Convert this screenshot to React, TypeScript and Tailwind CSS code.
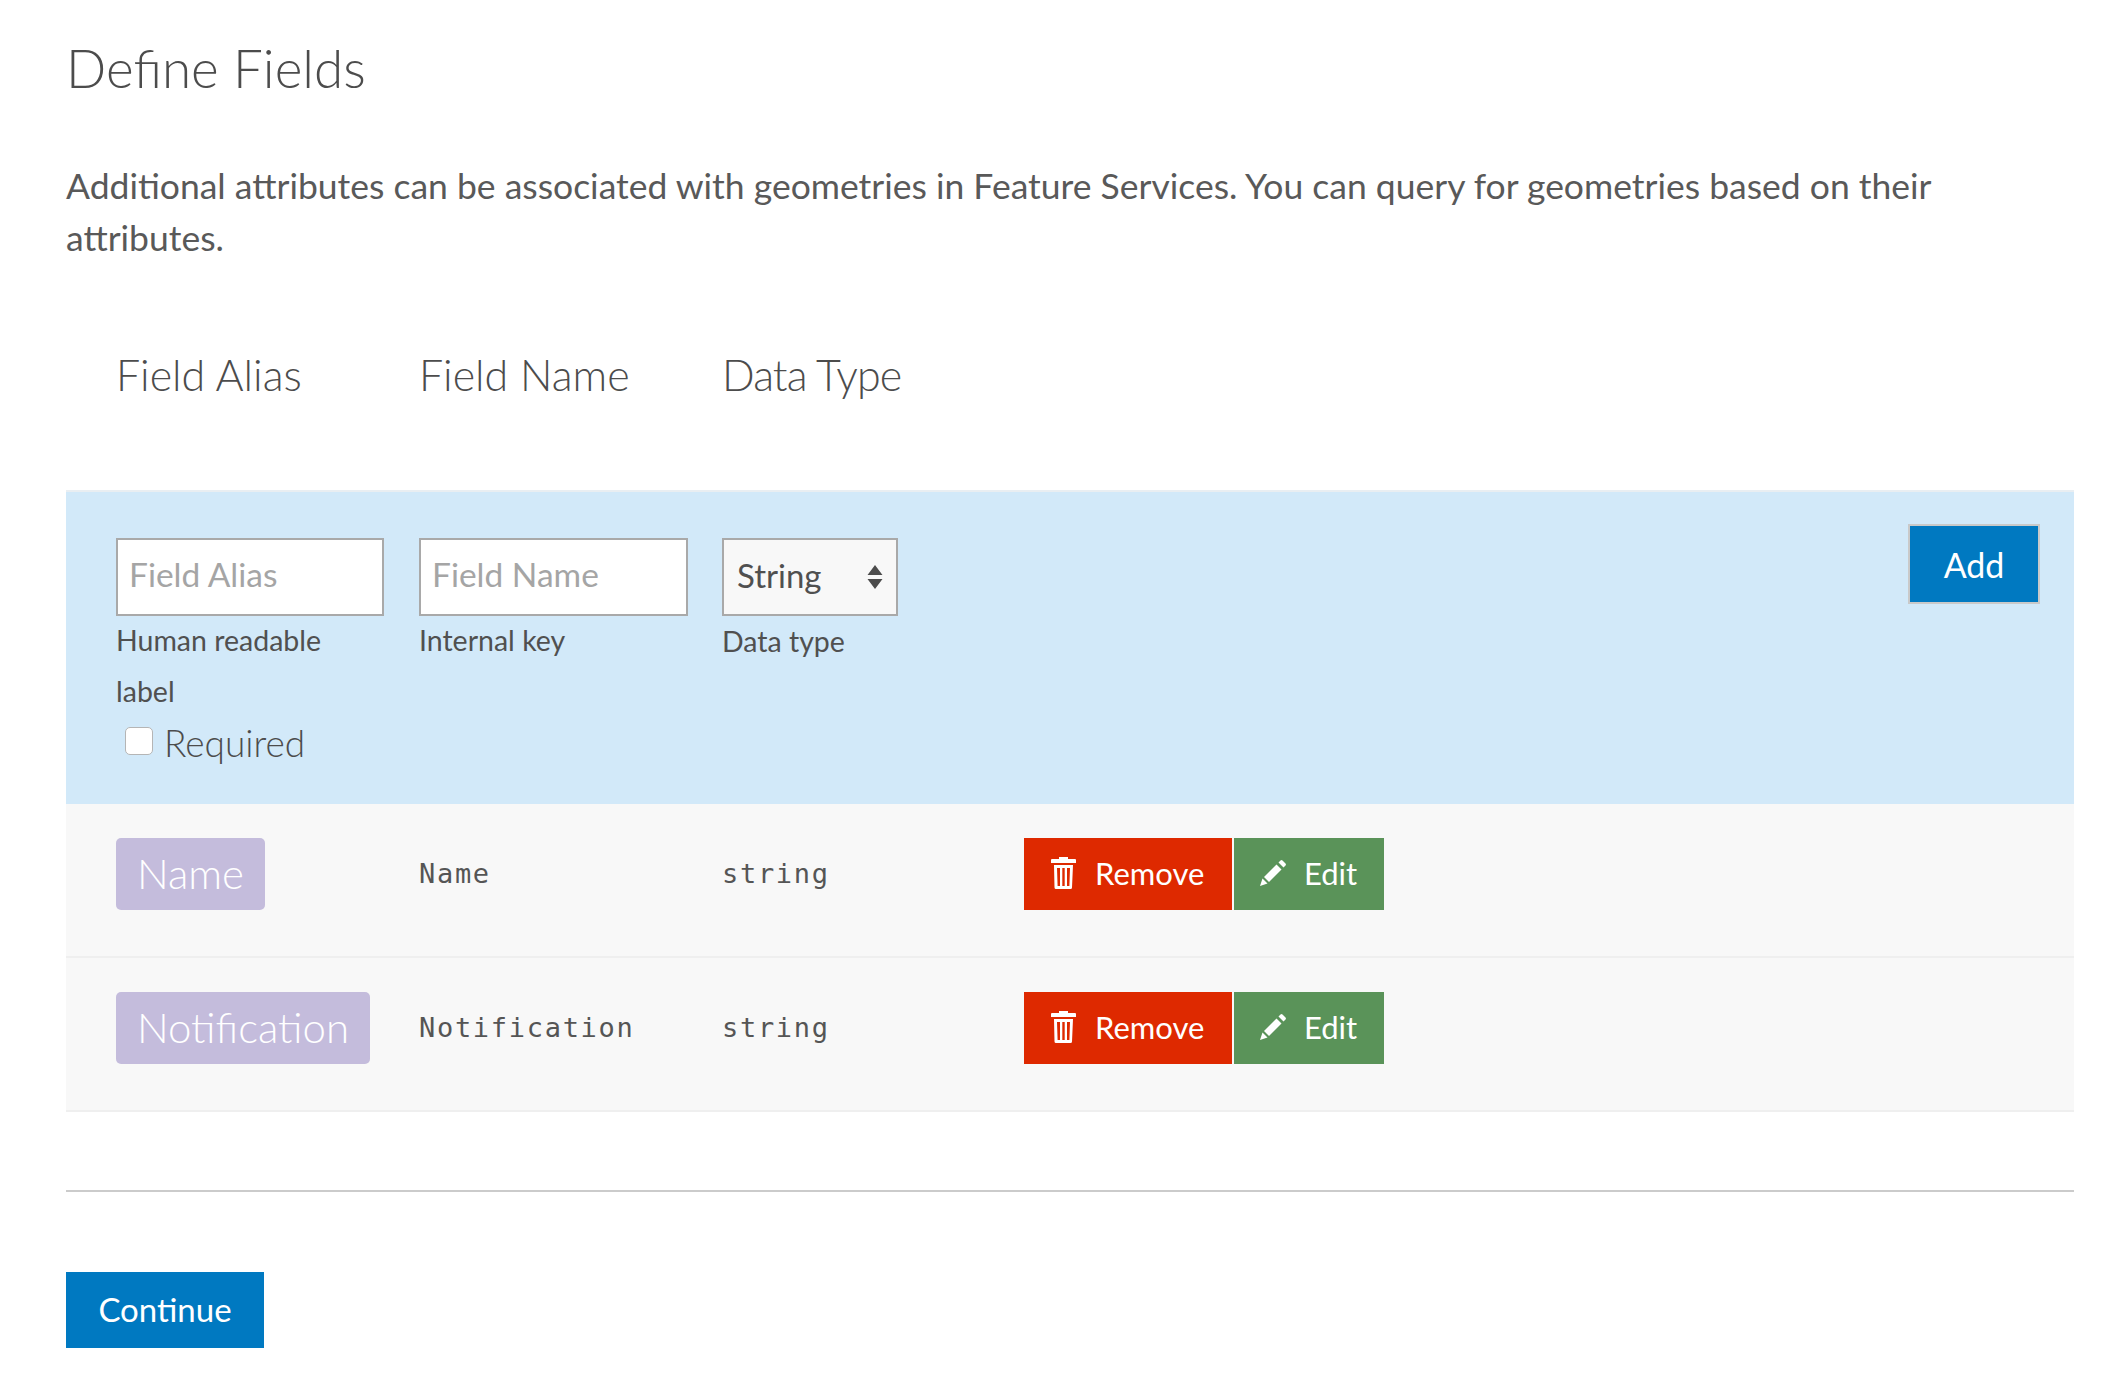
import React from "react";

const font = "font-['Lato','Noto_Sans',sans-serif]";

function TrashIcon() {
  return (
    <svg viewBox="0 0 25 32" className="w-[25px] h-[32px] shrink-0" fill="#fff">
      <path d="M8 0h9v2h7a1 1 0 0 1 1 1v3H0V3a1 1 0 0 1 1-1h7z" />
      <path fillRule="evenodd" d="M3 8h19l-1 22.500a1.500 1.500 0 0 1-1.500 1.500h-14.500a1.500 1.500 0 0 1-1.500-1.500zM6 11l.6 18h2.400V11zM11.300 11v18h2.400V11zM16 11v18h2.400l.6-18z" />
    </svg>
  );
}

function PencilIcon() {
  return (
    <svg viewBox="0 0 26 26" className="w-[26px] h-[26px] shrink-0" fill="#fff">
      <path d="M20.500 .5a1.500 1.500 0 0 1 2 0l3 3a1.500 1.500 0 0 1 0 2l-2 2-5-5z" />
      <path d="M16.500 4.500l5 5L9 22l-5-5z" />
      <path d="M2.500 18.500l5 5L0 26z" />
    </svg>
  );
}

function FieldRow({ alias, name }: { alias: string; name: string }) {
  return (
    <div className="flex items-start h-[154px] pt-[34px] pl-[50px] bg-[#f8f8f8] border-b-2 border-[#efefef]">
      <div className="w-[303px] shrink-0">
        <span className="inline-flex items-center h-[72px] px-[21px] pb-[2px] rounded-[5px] bg-[#c4bcdc] text-white text-[42px] font-light">
          {alias}
        </span>
      </div>
      <div className="w-[303px] shrink-0 h-[72px] pt-[1px] flex items-center font-['DejaVu_Sans_Mono',monospace] text-[27px] tracking-[1.7px] text-[#555555]">
        {name}
      </div>
      <div className="w-[302px] shrink-0 h-[72px] pt-[1px] flex items-center font-['DejaVu_Sans_Mono',monospace] text-[27px] tracking-[1.7px] text-[#555555]">
        string
      </div>
      <div className="flex gap-[2px]">
        <button className="flex items-center w-[208px] h-[72px] pl-[27px] pb-[2px] gap-[19px] bg-[#de2900] text-white text-[31px]">
          <TrashIcon />
          Remove
        </button>
        <button className="flex items-center w-[150px] h-[72px] pl-[26px] pb-[2px] gap-[18px] bg-[#5a9359] text-white text-[31px]">
          <PencilIcon />
          Edit
        </button>
      </div>
    </div>
  );
}

export default function App() {
  return (
    <div className={`${font} min-h-screen bg-white pl-[66px] pr-[44px] text-[#4c4c4c]`}>
      <h1 className="pt-[37px] text-[53px] leading-[62px] font-light">Define Fields</h1>
      <p className="mt-[61px] text-[35.500px] leading-[52px] text-[#595959]">
        Additional attributes can be associated with geometries in Feature Services. You can query for geometries based on their
        <br />
        attributes.
      </p>

      <div className="flex mt-[85px] pl-[50px] text-[43px] leading-[52px] font-light">
        <div className="w-[303px]">Field Alias</div>
        <div className="w-[303px]">Field Name</div>
        <div className="tracking-[-0.9px]">Data Type</div>
      </div>

      <div className="relative mt-[89px] h-[314px] pl-[50px] pt-[46px] bg-[#d2e9f9] border-t-2 border-[#e9eef2]">
        <div className="flex">
          <div className="w-[303px] shrink-0">
            <input
              placeholder="Field Alias"
              className="block w-[268px] h-[78px] px-[11px] pb-[6px] bg-white border-2 border-[#a9a9a9] text-[33.500px] placeholder:text-[#a5a5a5]"
            />
            <div className="w-[260px] -mt-[1px] text-[28.500px] leading-[51px] text-[#505050]">Human readable label</div>
            <label className="flex items-center mt-[1px] pl-[9px] h-[50px] text-[37px] font-light">
              <span className="w-[28px] h-[28px] mb-[4px] mr-[11px] rounded-[5px] bg-white border border-[#b5b5b5]" />
              Required
            </label>
          </div>
          <div className="w-[303px] shrink-0">
            <input
              placeholder="Field Name"
              className="block w-[269px] h-[78px] px-[11px] pb-[6px] bg-white border-2 border-[#a9a9a9] text-[33.500px] placeholder:text-[#a5a5a5]"
            />
            <div className="-mt-[1px] text-[28.500px] leading-[51px] text-[#505050]">Internal key</div>
          </div>
          <div>
            <div className="flex items-center justify-between w-[176px] h-[78px] pl-[13px] pr-[13px] bg-[#f8f8f8] border-2 border-[#a9a9a9] text-[33px] text-[#505050]">
              <span className="pb-[2px]">String</span>
              <svg viewBox="0 0 16 26" className="w-[16px] h-[26px]" fill="#4c4c4c">
                <path d="M8 1l7.500 10H.5zM8 25L.5 15h15z" />
              </svg>
            </div>
            <div className="text-[28.500px] leading-[51px] text-[#505050]">Data type</div>
          </div>
        </div>
        <button className="absolute top-[32px] right-[34px] w-[132px] h-[80px] bg-[#0079c1] border-2 border-[#c9c9c9] text-white text-[34px]">
          Add
        </button>
      </div>

      <FieldRow alias="Name" name="Name" />
      <FieldRow alias="Notification" name="Notification" />

      <hr className="mt-[78px] border-0 h-[2px] bg-[#cbcbcb]" />

      <button className="block mt-[80px] w-[198px] h-[76px] bg-[#0079c1] text-white text-[33px]">Continue</button>
    </div>
  );
}
